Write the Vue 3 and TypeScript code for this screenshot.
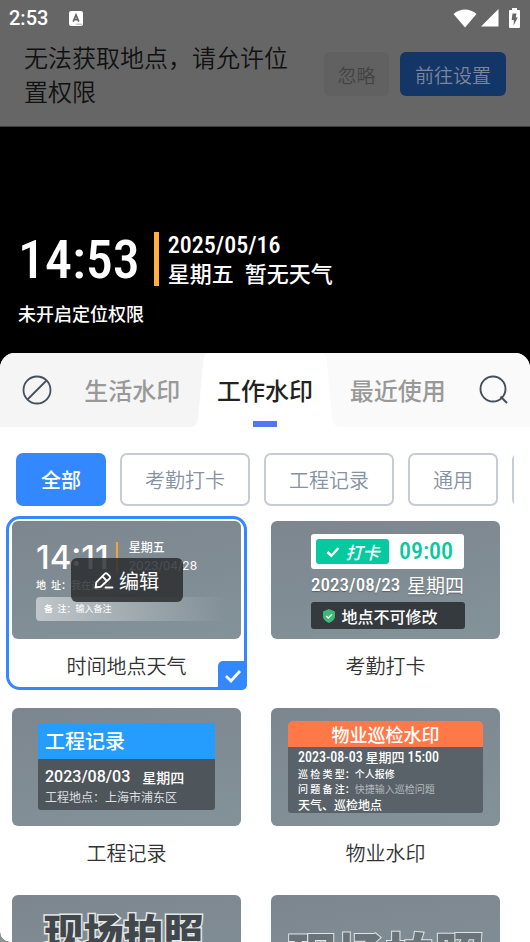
<script setup lang="ts">
import { ref } from 'vue'

interface Template {
  id: string
  name: string
}

const tabs: string[] = ['生活水印', '工作水印', '最近使用']
const filters: string[] = ['全部', '考勤打卡', '工程记录', '通用', '物业']
const templates: Template[] = [
  { id: 'weather', name: '时间地点天气' },
  { id: 'punch', name: '考勤打卡' },
  { id: 'project', name: '工程记录' },
  { id: 'property', name: '物业水印' },
  { id: 'photo', name: '现场拍照' },
  { id: 'photoOutline', name: '现场拍照' },
]

const activeTab = ref(1)
const activeFilter = ref(0)
const selected = ref('weather')
</script>

<template>
  <main class="screen">
    <header class="top">
      <div class="status">
        <span class="clock">2:53</span>
        <svg class="app-badge" width="14" height="15" viewBox="0 0 14 15" aria-hidden="true">
          <rect width="14" height="15" rx="2" fill="#fff" />
          <path d="M4.2 10.6 7 3.9l2.8 6.7M5.2 8.7h3.6" fill="none" stroke="#666" stroke-width="1.7" />
          <path d="M7.5 13.2h5" stroke="#666" stroke-width="1" stroke-dasharray="1 1" />
        </svg>
        <div class="signals">
          <svg width="24" height="19" viewBox="0 0 24 19" aria-hidden="true">
            <path d="M.5 5C7-1 17-1 23.500 5L12 18.500Z" fill="#fff" />
          </svg>
          <svg class="cell" width="18" height="18" viewBox="0 0 18 18" aria-hidden="true">
            <path d="M17.500 0V17.500H0Z" fill="#fff" />
          </svg>
          <svg width="11" height="20" viewBox="0 0 11 20" aria-hidden="true">
            <path d="M3 0h5v2h2q1 0 1 1v16q0 1-1 1H1q-1 0-1-1V3q0-1 1-1h2Z" fill="#fff" />
            <path d="M3.500 5.500h4L6.700 9.500H8.800L4.500 17.500l.4-5.500H2.700Z" fill="#666" />
          </svg>
        </div>
      </div>
      <div class="notice">
        <p>无法获取地点，请允许位置权限</p>
        <button type="button" class="ignore">忽略</button>
        <button type="button" class="settings">前往设置</button>
      </div>
    </header>

    <section class="preview">
      <div class="mark">
        <span class="mark-time">14:53</span>
        <span class="mark-bar"></span>
        <div class="mark-info">
          <span class="mark-date">2025/05/16</span>
          <span class="mark-day">星期五&ensp;暂无天气</span>
        </div>
      </div>
      <p class="mark-place">未开启定位权限</p>
    </section>

    <section class="sheet">
      <nav class="tabs">
        <button type="button" class="icon-btn" aria-label="无水印">
          <svg width="30" height="30" viewBox="0 0 30 30" aria-hidden="true">
            <g fill="none" stroke="#45505c" stroke-width="1.800">
              <circle cx="15" cy="15" r="13.500" />
              <path d="M5.500 24.500 24.500 5.500" />
            </g>
          </svg>
        </button>
        <button
          v-for="(tab, i) in tabs"
          :key="tab"
          type="button"
          class="tab"
          :class="{ active: i === activeTab }"
          @click="activeTab = i"
        >
          <svg v-if="i === activeTab" class="tab-shape" viewBox="0 0 151 74" preserveAspectRatio="none" aria-hidden="true">
            <path d="M0 74C5 74 7.500 71 8 66L13.500 6C14 2 16 0 20 0H131C135 0 136.500 2 137 6L142.500 66C143 71 146 74 151 74Z" fill="#fff" />
          </svg>
          <span class="tab-text">{{ tab }}</span>
        </button>
        <button type="button" class="icon-btn" aria-label="搜索">
          <svg width="30" height="30" viewBox="0 0 30 30" aria-hidden="true">
            <g fill="none" stroke="#45505c" stroke-width="1.900">
              <circle cx="14" cy="14" r="12.500" />
              <path d="M21.500 21.500 28 28" />
            </g>
          </svg>
        </button>
      </nav>

      <div class="filters">
        <button
          v-for="(f, i) in filters"
          :key="f"
          type="button"
          class="chip"
          :class="{ on: i === activeFilter }"
          @click="activeFilter = i"
        >{{ f }}</button>
      </div>

      <div class="grid">
        <article
          v-for="t in templates"
          :key="t.id"
          class="card"
          :class="{ selected: t.id === selected }"
          @click="selected = t.id"
        >
          <div class="thumb" :class="t.id">
            <template v-if="t.id === 'weather'">
              <div class="w-row">
                <span class="w-time">14:11</span>
                <span class="w-bar"></span>
                <div class="w-info"><b>星期五</b><span>2023/04/28</span></div>
              </div>
              <p class="w-place"><span>地&ensp;址：</span>我在这里</p>
              <p class="w-note"><span>备&ensp;注：</span>输入备注</p>
            </template>

            <template v-else-if="t.id === 'punch'">
              <div class="p-head">
                <span class="p-tag">
                  <svg width="14" height="12" viewBox="0 0 14 12" aria-hidden="true">
                    <path d="M1.500 6 5.300 9.800 12.500 2" fill="none" stroke="#fff" stroke-width="2.500" />
                  </svg>
                  <i>打卡</i>
                </span>
                <span class="p-time">09:00</span>
              </div>
              <p class="p-date"><span>2023/08/23</span><span>星期四</span></p>
              <p class="p-lock">
                <svg width="12" height="14" viewBox="0 0 12 14" aria-hidden="true">
                  <path d="M6 0 12 2.500V8Q11.500 11.500 6 14Q.5 11.500 0 8V2.500Z" fill="#3cb878" />
                  <path d="M3.200 7 5.300 9 9 5.200" fill="none" stroke="#fff" stroke-width="1.300" />
                </svg>
                <span>地点不可修改</span>
              </p>
            </template>

            <div v-else-if="t.id === 'project'" class="e-box">
              <h3>工程记录</h3>
              <div class="e-body">
                <p class="e-date"><span>2023/08/03</span><span>星期四</span></p>
                <p class="e-place">工程地点：上海市浦东区</p>
              </div>
            </div>

            <div v-else-if="t.id === 'property'" class="r-box">
              <h3>物业巡检水印</h3>
              <div class="r-body">
                <p class="r-date"><span>2023-08-03</span> <b>星期四</b> <span>15:00</span></p>
                <p class="r-line"><span>巡 检 类 型：</span>个人报修</p>
                <p class="r-line"><span>问 题 备 注：</span><em>快捷输入巡检问题</em></p>
                <p class="r-place">天气、巡检地点</p>
              </div>
            </div>

            <span v-else class="stamp">现场拍照</span>

            <button v-if="t.id === selected" type="button" class="edit">
              <svg width="20" height="20" viewBox="0 0 20 20" aria-hidden="true">
                <g fill="none" stroke="#fff" stroke-width="1.900" stroke-linejoin="round" stroke-linecap="round">
                  <path d="M1.500 17.500 2.300 12.300 11 3.600Q12 2.800 13 3.600L15.800 6.400Q16.600 7.400 15.800 8.400L6.700 16.700Z" />
                  <path d="M8.500 6.500 12.800 10.800M11.500 17.500H18.500" />
                </g>
              </svg>
              <span>编辑</span>
            </button>
          </div>
          <h2>{{ t.name }}</h2>
          <span v-if="t.id === selected" class="check">
            <svg width="18" height="16" viewBox="0 0 18 16" aria-hidden="true">
              <path d="M2 8 7 13 16 3" fill="none" stroke="#fff" stroke-width="2.800" />
            </svg>
          </span>
        </article>
      </div>
    </section>
  </main>
</template>

<style>
body {
  background: #8d9295;
}
</style>

<style scoped>
* {
  box-sizing: border-box;
}
p,
h2,
h3 {
  margin: 0;
  font-weight: 400;
}
button {
  font: inherit;
  border: 0;
  margin: 0;
  padding: 0;
  background: none;
  cursor: pointer;
}
svg {
  display: block;
  flex: none;
}
.screen {
  height: 100vh;
  display: flex;
  flex-direction: column;
  overflow: hidden;
  background: #000;
  border-bottom-left-radius: 10px;
  font-family: 'Noto Sans CJK SC', sans-serif;
}
.top {
  background: #666;
  border-bottom: 1px solid #3c3c3c;
  padding-bottom: 18px;
}
.status {
  display: flex;
  align-items: center;
  height: 36px;
  padding: 0 10px 0 9px;
  color: #fff;
}
.clock {
  font: 500 20px/36px Roboto, sans-serif;
}
.app-badge {
  margin-left: 21px;
}
.signals {
  display: flex;
  align-items: center;
  margin-left: auto;
}
.cell {
  margin: 0 10px 0 4px;
}
.notice {
  display: flex;
  align-items: center;
  padding: 4px 24px 0;
}
.notice p {
  flex: 1;
  margin-right: 34px;
  color: #111;
  font-size: 24px;
  font-weight: 350;
  line-height: 34px;
}
.notice button {
  height: 44px;
  border-radius: 6px;
  font-size: 19px;
  font-weight: 350;
}
.notice .ignore {
  width: 65px;
  background: #616161;
  color: #434343;
}
.notice .settings {
  width: 106px;
  margin-left: 11px;
  background: #143666;
  color: #7c8698;
}
.preview {
  flex: none;
  padding: 105px 18px 26px;
  color: #fff;
}
.mark {
  display: flex;
  align-items: center;
}
.mark-time {
  padding-top: 2px;
  font: 500 54px/50px 'Roboto Condensed', 'Liberation Sans Narrow', sans-serif;
}
.mark-bar {
  width: 5px;
  height: 54px;
  margin: 0 9px 0 14px;
  background: #ffb040;
}
.mark-info {
  display: flex;
  flex-direction: column;
}
.mark-date {
  font: 500 24px/26px 'Roboto Condensed', 'Liberation Sans Narrow', sans-serif;
}
.mark-day {
  font-size: 22px;
  font-weight: 500;
  line-height: 28px;
}
.mark-place {
  margin-top: 13px;
  font-size: 18px;
  font-weight: 500;
  line-height: 28px;
}
.sheet {
  flex: 1;
  min-height: 0;
  display: flex;
  flex-direction: column;
  overflow: hidden;
  background: #fff;
  border-radius: 15px 15px 0 0;
}
.tabs {
  flex: none;
  display: grid;
  grid-template-columns: 66px 1fr 1fr 1fr 66px;
  height: 74px;
  background: linear-gradient(90deg, #f5f5f5 50%, #fafafa 50%);
}
.icon-btn {
  display: flex;
  align-items: center;
  justify-content: center;
  padding-left: 8px;
}
.icon-btn:last-child {
  padding: 0 6px 0 0;
}
.tab {
  position: relative;
  padding-bottom: 2px;
  color: #999;
  font-size: 24px;
  font-weight: 500;
}
.tab.active {
  color: #222;
}
.tab-shape {
  position: absolute;
  top: 0;
  left: -9px;
  width: calc(100% + 18px);
  height: 100%;
}
.tab-text {
  position: relative;
}
.tab.active::after {
  content: '';
  position: absolute;
  bottom: 0;
  left: calc(50% - 12px);
  width: 24px;
  height: 6px;
  background: #5277f6;
}
.filters {
  flex: none;
  display: flex;
  gap: 14px;
  margin: 26px 16px 10px;
  overflow-x: auto;
  scrollbar-width: none;
}
.chip {
  flex: none;
  height: 53px;
  padding: 0 23px;
  border: 2px solid #c6ccd5;
  border-radius: 7px;
  color: #8792a0;
  font-size: 20px;
  font-weight: 350;
}
.chip.on {
  background: #3388ff;
  border-color: #3388ff;
  color: #fff;
  font-weight: 500;
}
.grid {
  flex: 1;
  min-height: 0;
  display: grid;
  grid-template-columns: 1fr 1fr;
  grid-auto-rows: max-content;
  gap: 13px 18px;
  padding: 0 24px 0 6px;
  overflow-y: auto;
  scrollbar-width: none;
}
.card {
  position: relative;
  padding: 2px 3px;
  border: 3px solid transparent;
  border-radius: 14px;
}
.card.selected {
  border-color: #3388ff;
}
.card h2 {
  color: #333;
  font-size: 20px;
  font-weight: 350;
  line-height: 46px;
  text-align: center;
  padding-top: 4px;
  margin-bottom: -4px;
}
.check {
  position: absolute;
  right: -3px;
  bottom: -3px;
  display: flex;
  align-items: center;
  justify-content: center;
  width: 29px;
  height: 29px;
  border-radius: 5px 0 5px 0;
  background: #3388ff;
}
.thumb {
  position: relative;
  height: 118px;
  display: flex;
  flex-direction: column;
  align-items: center;
  overflow: hidden;
  border-radius: 6px;
  background: linear-gradient(170deg, #7d868e, #839299);
  color: #fff;
}
.edit {
  position: absolute;
  top: 37px;
  left: calc(50% - 56px);
  width: 112px;
  height: 44px;
  display: flex;
  align-items: center;
  justify-content: center;
  gap: 5px;
  border-radius: 6px;
  background: rgba(40, 42, 45, 0.83);
  color: #fff;
  font-size: 20px;
}
.weather {
  align-items: stretch;
  padding: 18px 0 0 24px;
}
.w-row {
  display: flex;
  align-items: center;
}
.w-time {
  font: 500 33px/32px Inter, sans-serif;
}
.w-bar {
  width: 2px;
  height: 31px;
  margin: 0 11px 0 7px;
  background: #f5a13c;
}
.w-info {
  display: flex;
  flex-direction: column;
  font: 400 12px/18px Inter, 'Noto Sans CJK SC', sans-serif;
}
.w-info b {
  font-weight: 500;
}
.w-place {
  font-size: 10px;
  line-height: 20px;
}
.w-place span,
.w-note span {
  font-weight: 500;
}
.w-note {
  margin: 2px 14px 0 0;
  padding-left: 8px;
  border-radius: 4px;
  background: linear-gradient(90deg, rgba(255, 255, 255, 0.5), rgba(255, 255, 255, 0));
  font-size: 9px;
  line-height: 24px;
}
.punch {
  padding: 13px 0 0 4px;
}
.p-head {
  display: flex;
  align-items: center;
  width: 153px;
  height: 35px;
  padding: 0 5px;
  border-radius: 3px;
  background: #fff;
}
.p-tag {
  display: flex;
  align-items: center;
  justify-content: center;
  gap: 6px;
  width: 73px;
  height: 25px;
  border-radius: 3px;
  background: #06c9a0;
  font-size: 17px;
  font-weight: 500;
}
.p-time {
  flex: 1;
  padding-left: 4px;
  color: #06c9a0;
  text-align: center;
  font: 500 24px/35px 'Roboto Condensed', 'Liberation Sans Narrow', sans-serif;
}
.p-date {
  display: flex;
  justify-content: space-between;
  width: 153px;
  margin-top: 2px;
  font-size: 19px;
  line-height: 28px;
  text-shadow: 0 1px 1px rgba(0, 0, 0, 0.3);
}
.p-date span:first-child {
  font: 500 19px/28px 'Roboto Condensed', 'Liberation Sans Narrow', sans-serif;
}
.p-lock {
  display: flex;
  align-items: center;
  gap: 7px;
  width: 154px;
  height: 27px;
  margin-top: 3px;
  padding-left: 12px;
  border-radius: 3px;
  background: #343a3d;
  font-size: 16px;
  font-weight: 500;
}
.project {
  padding-top: 15px;
}
.e-box {
  width: 177px;
  overflow: hidden;
  border-radius: 3px;
}
.e-box h3 {
  padding-left: 7px;
  background: #249dff;
  font-size: 20px;
  font-weight: 500;
  line-height: 36px;
}
.e-body {
  padding: 8px 7px 3px;
  background: #4e555b;
}
.e-date {
  display: flex;
  gap: 12px;
  font-size: 14px;
  font-weight: 500;
  line-height: 20px;
}
.e-date span:first-child {
  font-family: Roboto, sans-serif;
  font-size: 16px;
}
.e-place {
  color: #dcdee0;
  font-size: 12px;
  line-height: 20px;
}
.property {
  padding-top: 13px;
}
.r-box {
  width: 195px;
  overflow: hidden;
  border-radius: 5px 5px 3px 3px;
}
.r-box h3 {
  background: #ff7848;
  font-size: 18px;
  font-weight: 500;
  line-height: 26px;
  text-align: center;
}
.r-body {
  padding: 1px 10px 0;
  background: #596269;
}
.r-date {
  font-size: 13px;
  font-weight: 500;
  line-height: 18px;
  white-space: nowrap;
}
.r-date b {
  font-weight: 500;
}
.r-date span {
  font-family: 'Roboto Condensed', 'Liberation Sans Narrow', sans-serif;
  font-size: 14px;
  font-weight: 500;
}
.r-line {
  font-size: 10px;
  font-weight: 500;
  line-height: 15px;
  white-space: nowrap;
}
.r-line em {
  color: #b4b9bd;
  font-style: normal;
  font-weight: 400;
}
.r-place {
  font-size: 12px;
  font-weight: 500;
  line-height: 17px;
}
.stamp {
  font-weight: 900;
  paint-order: stroke fill;
  white-space: nowrap;
}
.photo .stamp {
  padding: 10px 6px 0 0;
  color: #42474b;
  font-size: 40px;
  line-height: 52px;
  -webkit-text-stroke: 3px #e4e7e8;
}
.photoOutline .stamp {
  padding-top: 28px;
  color: #69737a;
  font-size: 49px;
  line-height: 60px;
  -webkit-text-stroke: 2px #dfe3e5;
}
</style>
